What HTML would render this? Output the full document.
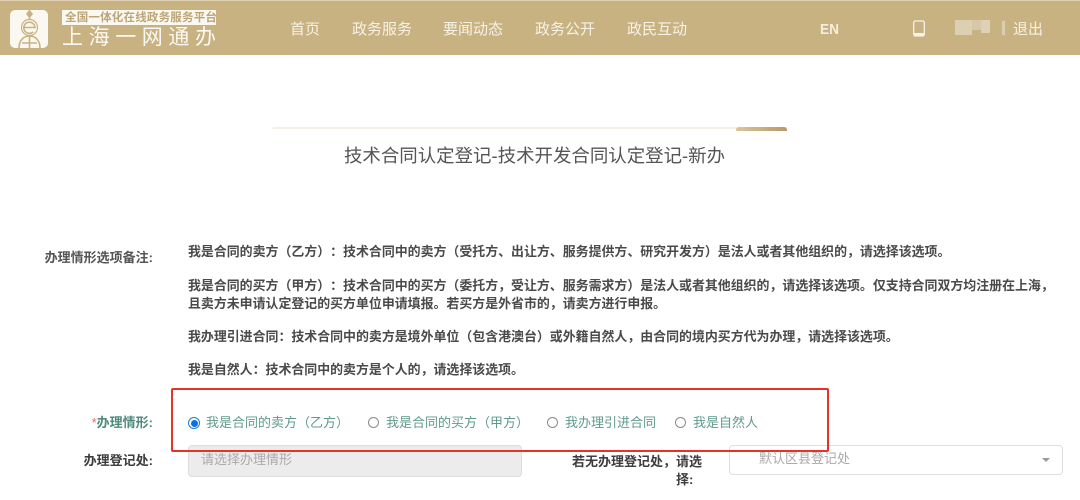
<!DOCTYPE html>
<html lang="zh"><head><meta charset="utf-8"><style>
html,body{margin:0;padding:0;width:1080px;height:500px;overflow:hidden;background:#fff}
body{position:relative;font-family:"Liberation Sans","Noto Sans CJK SC",sans-serif;text-spacing-trim:space-all}
.t{position:absolute;white-space:nowrap;line-height:20px}
.hd{position:absolute;left:0;top:0;width:1080px;height:55px;background:#c9b282;border-top:1px solid #ded0b0;box-sizing:border-box}
.nav{color:#f7f2e6;font-size:15px}
.n{font-size:12.93px;color:#4a4a4a;font-weight:700;left:188px}
.l{font-size:13px;text-align:right;font-weight:700;color:#3d3d3d}
.r{font-size:13px;color:#5f9a8c}
.c{position:absolute;width:9px;height:9px;border:1px solid #8a8a8a;border-radius:50%;background:#fff;top:417px}
</style></head><body>
<div class="hd"></div>
<div style="position:absolute;left:10px;top:10px;width:38px;height:38px;background:#fbf8f1;border-radius:5px"></div>
<svg style="position:absolute;left:10px;top:10px" width="38" height="38" viewBox="0 0 38 38" fill="none" stroke="#c9b282" stroke-width="1.6">
<path d="M19.5 0v9"/><path d="M19.5 1l2.5 3-2.5 3-2.5-3z" fill="#c9b282"/>
<path d="M14 17.500h11a5.600 5.600 0 1 0-1.800 4.400"/>
<circle cx="19.5" cy="17.5" r="8" stroke-width="1.2"/>
<path d="M9 38c0-7 4-12 10.500-12s10.500 5 10.500 12M19.500 26v12M12 33h15"/></svg>
<div style="position:absolute;left:62px;top:10px;width:154px;height:15px;background:#fbf8f1"></div>
<div class="t" style="left:65px;top:8px;font-size:11.500px;font-weight:700;color:#bba576;letter-spacing:.2px">全国一体化在线政务服务平台</div>
<div class="t" style="left:62px;top:26px;font-size:21px;line-height:24px;color:#fbf8f1;letter-spacing:5.600px">上海一网通办</div>
<div class="t nav" style="left:290px;top:20px">首页</div>
<div class="t nav" style="left:352px;top:20px">政务服务</div>
<div class="t nav" style="left:443px;top:20px">要闻动态</div>
<div class="t nav" style="left:535px;top:20px">政务公开</div>
<div class="t nav" style="left:627px;top:20px">政民互动</div>
<div class="t nav" style="left:820px;top:20px;font-size:14.500px;font-weight:700;color:#f5efe0;transform:scaleX(.94);transform-origin:0 0">EN</div>
<svg style="position:absolute;left:912px;top:20px" width="14" height="17" viewBox="0 0 14 17"><rect x="1.700" y="1" width="10.600" height="15" rx="1.600" fill="none" stroke="#f7f2e6" stroke-width="1.300"/><rect x="1.700" y="13" width="10.600" height="3" fill="#f7f2e6"/></svg>
<div style="position:absolute;left:955px;top:20px;width:17px;height:15px;background:#dccfb2"></div>
<div style="position:absolute;left:972px;top:20px;width:9px;height:10px;background:#d6c8a8"></div>
<div style="position:absolute;left:981px;top:20px;width:9px;height:13px;background:#ddd1b6"></div>
<div style="position:absolute;left:1002px;top:21px;width:3px;height:14px;background:#dacdb0"></div>
<div class="t nav" style="left:1013px;top:20px">退出</div>

<div style="position:absolute;left:272px;top:127px;width:515px;height:2px;background:#f4efe5;border-radius:3px 0 0 0"></div>
<div style="position:absolute;left:736px;top:127px;width:51px;height:4px;background:linear-gradient(90deg,#d9c59b,#b9986a);border-radius:3px 3px 0 0"></div>
<div class="t" style="left:344px;top:145px;font-size:18.450px;color:#555;line-height:22px">技术合同认定登记-技术开发合同认定登记-新办</div>

<div class="t l" style="right:927px;top:248px;color:#555">办理情形选项备注:</div>
<div class="t n" style="top:242px">我是合同的卖方（乙方）：技术合同中的卖方（受托方、出让方、服务提供方、研究开发方）是法人或者其他组织的，请选择该选项。</div>
<div class="t n" style="top:276px">我是合同的买方（甲方）：技术合同中的买方（委托方，受让方、服务需求方）是法人或者其他组织的，请选择该选项。仅支持合同双方均注册在上海，</div>
<div class="t n" style="top:294px">且卖方未申请认定登记的买方单位申请填报。若买方是外省市的，请卖方进行申报。</div>
<div class="t n" style="top:327px">我办理引进合同：技术合同中的卖方是境外单位（包含港澳台）或外籍自然人，由合同的境内买方代为办理，请选择该选项。</div>
<div class="t n" style="top:360px">我是自然人：技术合同中的卖方是个人的，请选择该选项。</div>

<div class="t l" style="right:927px;top:413px;color:#4f8a7c"><span style="color:#e66;font-weight:400">*</span>办理情形:</div>
<div style="position:absolute;left:188px;top:417px;width:12px;height:12px;box-sizing:border-box;border:1px solid #1a7be0;border-radius:50%;background:#fff"></div>
<div style="position:absolute;left:190.500px;top:419.500px;width:7px;height:7px;border-radius:50%;background:#0a6fe8"></div>
<div class="t r" style="left:206px;top:413px">我是合同的卖方（乙方）</div>
<div class="c" style="left:368px"></div>
<div class="t r" style="left:386px;top:413px">我是合同的买方（甲方）</div>
<div class="c" style="left:547px"></div>
<div class="t r" style="left:565px;top:413px">我办理引进合同</div>
<div class="c" style="left:675px"></div>
<div class="t r" style="left:693px;top:413px">我是自然人</div>

<div class="t l" style="right:927px;top:451px">办理登记处:</div>
<div style="position:absolute;left:188px;top:445px;width:334px;height:32px;box-sizing:border-box;background:#ececec;border:1px solid #ddd;border-radius:4px"></div>
<div class="t" style="left:201px;top:450px;font-size:13px;color:#aaa">请选择办理情形</div>

<div class="t l" style="left:572px;top:452px">若无办理登记处，请选</div>
<div class="t l" style="left:676px;top:470px">择:</div>
<div style="position:absolute;left:729px;top:445px;width:334px;height:30px;box-sizing:border-box;background:#fff;border:1px solid #ddd;border-radius:4px"></div>
<div class="t" style="left:759px;top:449px;font-size:13px;color:#aaa">默认区县登记处</div>
<div style="position:absolute;left:1042px;top:458px;border:4px solid transparent;border-top:4px solid #999;border-bottom:0"></div>

<div style="position:absolute;left:171px;top:388px;width:658px;height:64px;box-sizing:border-box;border:2.500px solid #e5332a;border-radius:2px"></div>
</body></html>
